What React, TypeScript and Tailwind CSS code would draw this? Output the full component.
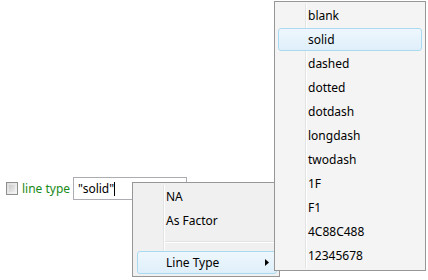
import React from 'react';

const font = { fontFamily: '"Noto Sans", "Open Sans", sans-serif' };

const lineTypes = [
  'blank',
  'solid',
  'dashed',
  'dotted',
  'dotdash',
  'longdash',
  'twodash',
  '1F',
  'F1',
  '4C88C488',
  '12345678',
];

const Highlight: React.FC<{ className?: string }> = ({ className = '' }) => (
  <div
    className={
      'absolute rounded-[3px] border border-[#a9daf1] bg-gradient-to-b from-[#eef7fd] to-[#dfeffa] ' +
      className
    }
  />
);

const MainMenu: React.FC = () => (
  <div className="absolute left-[132px] top-[182px] w-[148px] h-[95px] border border-[#979797] bg-[#f0f0f0] text-[12px] text-black">
    {/* gutter line */}
    <div className="absolute left-[30px] top-[2px] bottom-[2px] w-[2px] border-l border-[#e2e3e3] bg-white" />
    <div className="absolute left-[31px] top-[2px] bottom-[2px] w-px bg-white" />
    <div className="relative flex flex-col pt-[2px]">
      <div className="h-[24px] flex items-center pl-[33px]">NA</div>
      <div className="h-[24px] flex items-center pl-[33px]">As Factor</div>
      <div className="h-[17px] flex items-center pl-[32px] pr-[2px]">
        <div className="w-full h-[2px] border-t border-[#e2e3e3] bg-white" />
      </div>
      <div className="relative h-[23px] mt-px flex items-center pl-[33px]">
        <Highlight className="left-[4px] right-[2px] top-0 bottom-0" />
        <span className="relative">Line Type</span>
        <svg className="absolute right-[10px] top-[8px]" width="4" height="7" viewBox="0 0 4 7">
          <path d="M0 0 L4 3.5 L0 7 Z" fill="#000" />
        </svg>
      </div>
    </div>
  </div>
);

const SubMenu: React.FC = () => (
  <div className="absolute left-[274px] top-[1px] w-[152px] h-[270px] border border-[#979797] bg-[#f4f4f4] text-[12px] text-black">
    <div className="absolute left-[30px] top-[2px] bottom-[2px] w-[2px] border-l border-[#e2e3e3] bg-white" />
    <div className="relative flex flex-col pt-[2px]">
      {lineTypes.map((t) => (
        <div key={t} className="relative h-[24px] flex items-center pl-[33px]">
          {t === 'solid' && <Highlight className="left-[3px] right-[3px] top-0 bottom-px" />}
          <span className="relative">{t}</span>
        </div>
      ))}
    </div>
  </div>
);

export default function App() {
  return (
    <div className="relative w-[428px] h-[280px] bg-white overflow-hidden" style={font}>
      <div className="flex items-center pt-[177px] pl-[6px] text-[12px]">
        <div className="w-[12px] h-[13px] border border-[#8e8f8f] bg-gradient-to-br from-[#dcdcdc] to-[#f6f6f6] p-[2px]">
          <div className="w-full h-full bg-gradient-to-br from-[#cbcbcb] to-[#eeeeee]" />
        </div>
        <span className="ml-[4px] text-[#178a17]">line type</span>
        <div className="ml-[3px] w-[114px] h-[23px] border border-[#abadb3] bg-white flex items-center pl-[4px] text-black">
          <span>"solid"</span>
          <span className="w-px h-[14px] bg-black" />
        </div>
      </div>
      <MainMenu />
      <SubMenu />
    </div>
  );
}
